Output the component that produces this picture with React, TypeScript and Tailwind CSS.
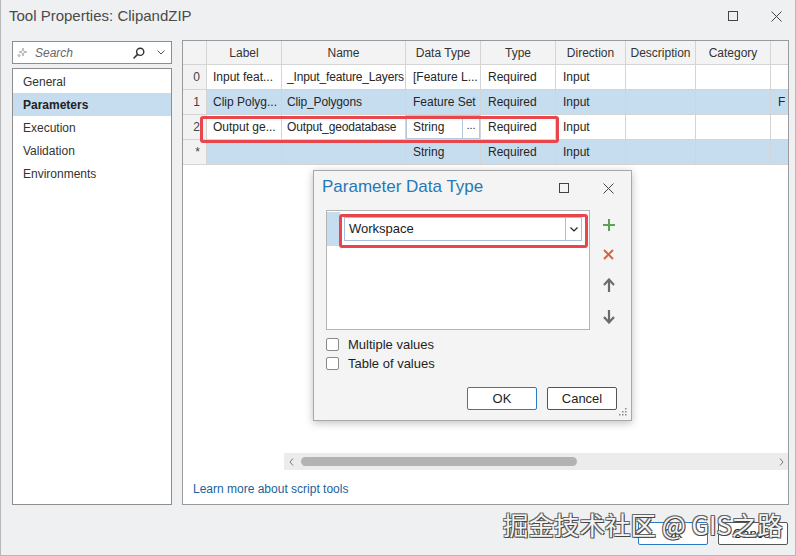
import React from "react";

const font = "font-['Liberation_Sans',Arial,sans-serif]";

const navItems = ["General", "Parameters", "Execution", "Validation", "Environments"];

const colW = [
  "w-[24px]",
  "w-[75px]",
  "w-[124px]",
  "w-[75px]",
  "w-[75px]",
  "w-[70px]",
  "w-[70px]",
  "w-[75px]",
  "w-[17px]",
];

const headers = ["", "Label", "Name", "Data Type", "Type", "Direction", "Description", "Category", ""];

const rows: { num: string; cells: string[]; blue: boolean }[] = [
  { num: "0", cells: ["Input feat...", "_Input_feature_Layers", "[Feature L...", "Required", "Input", "", "", ""], blue: false },
  { num: "1", cells: ["Clip Polyg...", "Clip_Polygons", "Feature Set", "Required", "Input", "", "", "F"], blue: true },
  { num: "2", cells: ["Output ge...", "Output_geodatabase", "__edit__", "Required", "Input", "", "", ""], blue: false },
  { num: "*", cells: ["", "", "String", "Required", "Input", "", "", ""], blue: true },
];

function CloseIcon({ size = 11 }: { size?: number }) {
  return (
    <svg width={size} height={size} viewBox="0 0 11 11">
      <path d="M0.5 0.5 L10.5 10.5 M10.5 0.5 L0.5 10.5" stroke="#444" strokeWidth="1" />
    </svg>
  );
}

function MaxIcon() {
  return <div className="h-[10px] w-[10px] border border-[#444]" />;
}

function SearchBox() {
  return (
    <div className="flex h-[23px] items-center border border-[#8e8e8e] bg-white pl-[4px] pr-[6px]">
      <svg width="11" height="11" viewBox="0 0 11 11">
        <path d="M6 1 L6.8 4.2 L10 5 L6.8 5.8 L6 9 L5.2 5.8 L2 5 L5.2 4.2 Z" fill="none" stroke="#9a9a9a" strokeWidth="0.7" />
        <path d="M2 7 L2.4 8.1 L3.5 8.5 L2.4 8.9 L2 10 L1.6 8.9 L0.5 8.5 L1.6 8.1 Z" fill="none" stroke="#9a9a9a" strokeWidth="0.6" />
      </svg>
      <span className="ml-[7px] flex-1 text-[12px] italic text-[#666]">Search</span>
      <svg width="12" height="12" viewBox="0 0 12 12" className="mr-[12px]">
        <circle cx="7.2" cy="4.8" r="3.6" fill="none" stroke="#333" strokeWidth="1.4" />
        <path d="M4.6 7.4 L1 11" stroke="#333" strokeWidth="1.6" strokeLinecap="round" />
      </svg>
      <svg width="8" height="5" viewBox="0 0 8 5">
        <path d="M0.5 0.5 L4 4 L7.5 0.5" fill="none" stroke="#555" strokeWidth="1" />
      </svg>
    </div>
  );
}

function Table() {
  return (
    <div className="flex flex-col text-[12px] text-[#262626]">
      <div className="flex h-[24px] border-b border-[#d4d4d4] bg-[#f3f3f3]">
        {headers.map((h, i) => (
          <div
            key={i}
            className={`${colW[i]} flex shrink-0 items-center justify-center border-r border-[#d4d4d4] text-[#333] last:border-r-0`}
          >
            {h}
          </div>
        ))}
      </div>
      {rows.map((r) => (
        <div key={r.num} className="flex h-[25px] border-b border-[#d4d4d4]">
          <div className={`${colW[0]} flex shrink-0 items-center justify-end border-r border-[#d4d4d4] bg-[#f2f2f2] pr-[6px] text-[#444]`}>
            {r.num}
          </div>
          {r.cells.map((c, i) => (
            <div
              key={i}
              className={`${colW[i + 1]} ${r.blue ? "bg-[#c6ddf0]" : "bg-white"} flex shrink-0 items-center whitespace-nowrap border-r border-[#d4d4d4] last:border-r-0 ${i === 0 ? "pl-[6px]" : i === 1 ? "pl-[5px] tracking-[-0.15px]" : "pl-[7px]"}`}
            >
              {c === "__edit__" ? (
                <div className="-ml-[7px] flex h-[24px] w-[75px] items-stretch border border-[#b4c8dc] bg-white">
                  <span className="flex flex-1 items-center pl-[6px]">String</span>
                  <span className="flex w-[17px] items-center justify-center border-l border-[#b4c8dc] pb-[4px] text-[11px]">...</span>
                </div>
              ) : (
                c
              )}
            </div>
          ))}
        </div>
      ))}
    </div>
  );
}

function ParamDialog() {
  return (
    <div className="absolute left-[312px] top-[170px] flex h-[251px] w-[319px] flex-col border border-[#a8a8a8] bg-[#f4f4f4] shadow-[0_2px_8px_rgba(0,0,0,0.25)]">
      <div className="flex h-[39px] items-start pl-[8px] pt-[3px]">
        <span className="flex-1 text-[17px] text-[#2878b8]">Parameter Data Type</span>
        <div className="mt-[9px] mr-[34px]">
          <MaxIcon />
        </div>
        <div className="mt-[9px] mr-[17px]">
          <CloseIcon />
        </div>
      </div>
      <div className="flex pl-[12px]">
        <div className="relative h-[120px] w-[264px] border border-[#b4b4b4] bg-white">
          <div className="flex h-[35px] items-center pt-[1px]">
            <div className="h-[34px] w-[13px] bg-[#c6ddf0]" />
            <div className="ml-[4px] flex h-[24px] w-[238px] border border-[#a9bfd6] bg-white">
              <span className="flex flex-1 items-center pl-[4px] text-[13px] text-[#1a1a1a]">Workspace</span>
              <span className="flex w-[16px] items-center justify-center border-l border-[#a9bfd6]">
                <svg width="8" height="5" viewBox="0 0 8 5">
                  <path d="M0.5 0.5 L4 4 L7.5 0.5" fill="none" stroke="#222" strokeWidth="1.2" />
                </svg>
              </span>
            </div>
          </div>
          <div className="absolute left-[12px] top-[3px] h-[34px] w-[249px] rounded-[3px] border-[3px] border-[#e8454d]" />
        </div>
        <div className="ml-[12px] flex w-[13px] flex-col items-center gap-[18px] pt-[9px]">
          <svg width="12" height="12" viewBox="0 0 12 12">
            <path d="M6 0 V12 M0 6 H12" stroke="#58a356" strokeWidth="2" />
          </svg>
          <svg width="11" height="11" viewBox="0 0 11 11">
            <path d="M1 1 L10 10 M10 1 L1 10" stroke="#d8653c" strokeWidth="2" />
          </svg>
          <svg width="12" height="14" viewBox="0 0 12 14">
            <path d="M6 2 V14 M1 7 L6 1.5 L11 7" fill="none" stroke="#6b6b6b" strokeWidth="2.2" />
          </svg>
          <svg width="12" height="14" viewBox="0 0 12 14">
            <path d="M6 0 V12 M1 7 L6 12.5 L11 7" fill="none" stroke="#6b6b6b" strokeWidth="2.2" />
          </svg>
        </div>
      </div>
      <div className="mt-[8px] flex flex-col gap-[6px] pl-[12px] text-[13px] text-[#1f1f1f]">
        <label className="flex h-[13px] items-center">
          <span className="h-[13px] w-[13px] rounded-[2px] border border-[#8a8a8a] bg-white" />
          <span className="ml-[9px]">Multiple values</span>
        </label>
        <label className="flex h-[13px] items-center">
          <span className="h-[13px] w-[13px] rounded-[2px] border border-[#8a8a8a] bg-white" />
          <span className="ml-[9px]">Table of values</span>
        </label>
      </div>
      <div className="mt-[17px] flex justify-end gap-[10px] pr-[14px] text-[13px] text-[#1f1f1f]">
        <button className="flex h-[23px] w-[70px] items-center justify-center rounded-[2px] border border-[#2a7bc4] bg-white">
          OK
        </button>
        <button className="flex h-[23px] w-[70px] items-center justify-center rounded-[2px] border border-[#555] bg-white">
          Cancel
        </button>
      </div>
      <div className="absolute bottom-[4px] right-[4px]">
        <svg width="10" height="10" viewBox="0 0 10 10">
          {[
            [8, 2],
            [8, 5],
            [8, 8],
            [5, 5],
            [5, 8],
            [2, 8],
          ].map(([x, y], i) => (
            <rect key={i} x={x} y={y} width="1.5" height="1.5" fill="#8a8a8a" />
          ))}
        </svg>
      </div>
    </div>
  );
}

export default function App() {
  return (
    <div className={`${font} relative flex h-[556px] w-[796px] flex-col overflow-hidden border-x border-b border-[#b8b8b8] bg-[#eef0f1]`}>
      <div className="flex h-[40px] items-start pl-[8px] pt-[5px]">
        <span className="flex-1 text-[15px] text-[#4a4a4a]">Tool Properties: ClipandZIP</span>
        <div className="mr-[33px] mt-[6px]">
          <MaxIcon />
        </div>
        <div className="mr-[13px] mt-[6px]">
          <CloseIcon />
        </div>
      </div>

      <div className="flex h-[465px] pl-[11px]">
        <div className="flex w-[160px] flex-col pt-[1px]">
          <SearchBox />
          <div className="mt-[4px] flex-1 border border-[#8e8e8e] bg-white pt-[1px] text-[12px] text-[#333]">
            {navItems.map((n) => (
              <div
                key={n}
                className={`flex h-[23px] items-center pl-[10px] ${n === "Parameters" ? "bg-[#c6ddf0] font-bold text-[#222]" : ""}`}
              >
                {n}
              </div>
            ))}
          </div>
        </div>

        <div className="ml-[10px] flex w-[607px] flex-col border border-[#9a9a9a] bg-white">
          <div className="relative">
            <Table />
            <div className="absolute left-[17px] top-[75px] h-[27px] w-[359px] rounded-[3px] border-[3px] border-[#e8454d]" />
          </div>
          <div className="flex-1" />
          <div className="ml-[101px] flex h-[17px] items-center bg-[#ececec] pl-[5px] pr-[4px]">
            <svg width="5" height="8" viewBox="0 0 5 8">
              <path d="M4 0.5 L1 4 L4 7.5" fill="none" stroke="#777" strokeWidth="1" />
            </svg>
            <div className="ml-[7px] h-[9px] w-[276px] rounded-full bg-[#b3b3b3]" />
            <div className="flex-1" />
            <svg width="5" height="8" viewBox="0 0 5 8">
              <path d="M1 0.5 L4 4 L1 7.5" fill="none" stroke="#777" strokeWidth="1" />
            </svg>
          </div>
          <div className="flex h-[34px] items-start pl-[10px] pt-[10px] text-[12px] text-[#1c5f9c]">
            Learn more about script tools
          </div>
        </div>
      </div>

      <div className="mt-[17px] flex justify-end gap-[10px] pr-[7px] text-[13px] text-[#1f1f1f]">
        <button className="flex h-[23px] w-[70px] items-center justify-center rounded-[2px] border border-[#2a7bc4] bg-white">
          OK
        </button>
        <button className="flex h-[23px] w-[70px] items-center justify-center rounded-[2px] border border-[#555] bg-white">
          Cancel
        </button>
      </div>

      <ParamDialog />

      <div className="absolute left-[502px] top-[508px] whitespace-nowrap font-['Noto_Sans_CJK_SC',sans-serif] text-[25.5px] leading-[32px] text-[#f4f4f4] [text-shadow:1px_1px_0_#444,-1px_-1px_0_#666,1px_-1px_0_#666,-1px_1px_0_#666]">
        掘金技术社区 @ GIS之路
      </div>
    </div>
  );
}
